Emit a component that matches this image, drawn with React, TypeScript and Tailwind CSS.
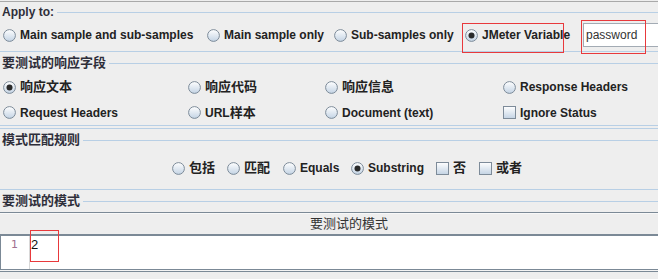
import React from "react";

const FONT = "font-['Liberation_Sans','Noto_Sans_CJK_SC',sans-serif]";

function Radio({ checked = false }: { checked?: boolean }) {
  return (
    <svg width="13" height="13" viewBox="0 0 13 13" className="shrink-0">
      <defs>
        <linearGradient id="rg" x1="0" y1="0" x2="0" y2="1">
          <stop offset="0" stopColor="#ffffff" />
          <stop offset="1" stopColor="#c3d3e4" />
        </linearGradient>
      </defs>
      <circle cx="6.5" cy="6.5" r="5.9" fill="url(#rg)" stroke="#7d8b99" strokeWidth="1" />
      {checked && <circle cx="6.5" cy="6.5" r="3" fill="#2a2a2a" />}
    </svg>
  );
}

function Check() {
  return (
    <svg width="13" height="13" viewBox="0 0 13 13" className="shrink-0">
      <defs>
        <linearGradient id="cg" x1="0" y1="0" x2="0" y2="1">
          <stop offset="0" stopColor="#ffffff" />
          <stop offset="1" stopColor="#c3d3e4" />
        </linearGradient>
      </defs>
      <rect x="0.5" y="0.5" width="12" height="12" fill="url(#cg)" stroke="#7d8b99" />
    </svg>
  );
}

function Opt({
  w,
  kind = "radio",
  checked = false,
  children,
}: {
  w: string;
  kind?: "radio" | "check";
  checked?: boolean;
  children: React.ReactNode;
}) {
  return (
    <div className={`flex items-center shrink-0 ${w}`}>
      {kind === "radio" ? <Radio checked={checked} /> : <Check />}
      <span className="ml-[4px] font-bold leading-[14px] whitespace-nowrap">{children}</span>
    </div>
  );
}

function Cjk({ children }: { children: React.ReactNode }) {
  return <span className="text-[13px]">{children}</span>;
}

function Title({ h, children }: { h: string; children: React.ReactNode }) {
  return (
    <div className={`flex items-center pl-[2px] ${h}`}>
      <span className="leading-[14px] text-[#2e2e3a] whitespace-nowrap">{children}</span>
      <div className="flex-1 h-px bg-[#b8cfe5] ml-[3px]" />
    </div>
  );
}

export default function App() {
  return (
    <div
      className={`w-[658px] h-[279px] bg-[#eeeeee] overflow-hidden relative ${FONT} text-[12px] text-[#222]`}
    >
      <div className="h-px" />
      <div className="h-px bg-[#a9a9a9]" />

      {/* Apply to */}
      <Title h="h-[20px]">
        <span className="font-bold">Apply to:</span>
      </Title>
      <div className="flex items-center h-[26px] pl-[3px]">
        <Opt w="w-[204px]">Main sample and sub-samples</Opt>
        <Opt w="w-[127px]">Main sample only</Opt>
        <Opt w="w-[131px]">Sub-samples only</Opt>
        <Opt w="w-[118px]" checked>
          JMeter Variable
        </Opt>
        <div className="h-[24px] flex-1 bg-white border-t border-l border-b border-[#a3abb4] flex items-center pl-[2px] text-[#333] leading-[14px]">
          password
        </div>
      </div>
      <div className="h-[3px]" />
      <div className="h-px bg-[#b8cfe5]" />

      {/* 要测试的响应字段 */}
      <Title h="h-[22px]">
        <span className="font-bold text-[13px]">要测试的响应字段</span>
      </Title>
      <div className="grid grid-cols-[185px_137px_178px_1fr] h-[26px] items-center pl-[3px]">
        <Opt w="w-auto" checked>
          <Cjk>响应文本</Cjk>
        </Opt>
        <Opt w="w-auto">
          <Cjk>响应代码</Cjk>
        </Opt>
        <Opt w="w-auto">
          <Cjk>响应信息</Cjk>
        </Opt>
        <Opt w="w-auto">Response Headers</Opt>
      </div>
      <div className="grid grid-cols-[185px_137px_178px_1fr] h-[25px] items-center pl-[3px]">
        <Opt w="w-auto">Request Headers</Opt>
        <Opt w="w-auto">
          URL<Cjk>样本</Cjk>
        </Opt>
        <Opt w="w-auto">Document (text)</Opt>
        <Opt w="w-auto" kind="check">
          Ignore Status
        </Opt>
      </div>
      <div className="h-px bg-[#b8cfe5]" />
      <div className="h-[2px]" />
      <div className="h-px bg-[#b8cfe5]" />

      {/* 模式匹配规则 */}
      <Title h="h-[22px]">
        <span className="font-bold text-[13px]">模式匹配规则</span>
      </Title>
      <div className="flex items-center h-[34px] pl-[172px]">
        <Opt w="w-[55px]">
          <Cjk>包括</Cjk>
        </Opt>
        <Opt w="w-[56px]">
          <Cjk>匹配</Cjk>
        </Opt>
        <Opt w="w-[68px]">Equals</Opt>
        <Opt w="w-[85px]" checked>
          Substring
        </Opt>
        <Opt w="w-[43px]" kind="check">
          <Cjk>否</Cjk>
        </Opt>
        <Opt w="w-[60px]" kind="check">
          <Cjk>或者</Cjk>
        </Opt>
      </div>
      <div className="h-[4px]" />
      <div className="h-px bg-[#b8cfe5]" />

      {/* 要测试的模式 */}
      <Title h="h-[22px]">
        <span className="font-bold text-[13px]">要测试的模式</span>
      </Title>
      <div className="h-px bg-[#7b8996]" />
      <div className="h-[21px] border-t border-[#f8f8f8] bg-[#eeeeee] flex items-center pl-[310px]">
        <span className="text-[13px] text-[#333] leading-[14px]">要测试的模式</span>
      </div>
      <div className="h-[2px] bg-[#7b8996]" />
      <div className="flex h-[33px] bg-white">
        <div className="w-[30px] border-l border-r border-l-[#7b8996] border-r-[#d8d8d8] pl-[10px] pt-[2px] text-[#a07090] font-['DejaVu_Sans',sans-serif] text-[11px] leading-[14px]">
          1
        </div>
        <div className="flex-1 pl-[1px] pt-[2px] text-[#111] leading-[14px] text-[13px]">2</div>
      </div>
      <div className="h-px bg-[#7b8996]" />
      <div className="h-px bg-[#f4f4f4]" />
      <div className="h-px bg-[#7b8996]" />

      {/* red annotation boxes */}
      <div className="absolute left-[462px] top-[23px] w-[102px] h-[30px] border border-[#e8393c]" />
      <div className="absolute left-[581px] top-[20px] w-[65px] h-[34px] border border-[#e8393c]" />
      <div className="absolute left-[30px] top-[230px] w-[29px] h-[32px] border border-[#e8393c]" />
    </div>
  );
}
